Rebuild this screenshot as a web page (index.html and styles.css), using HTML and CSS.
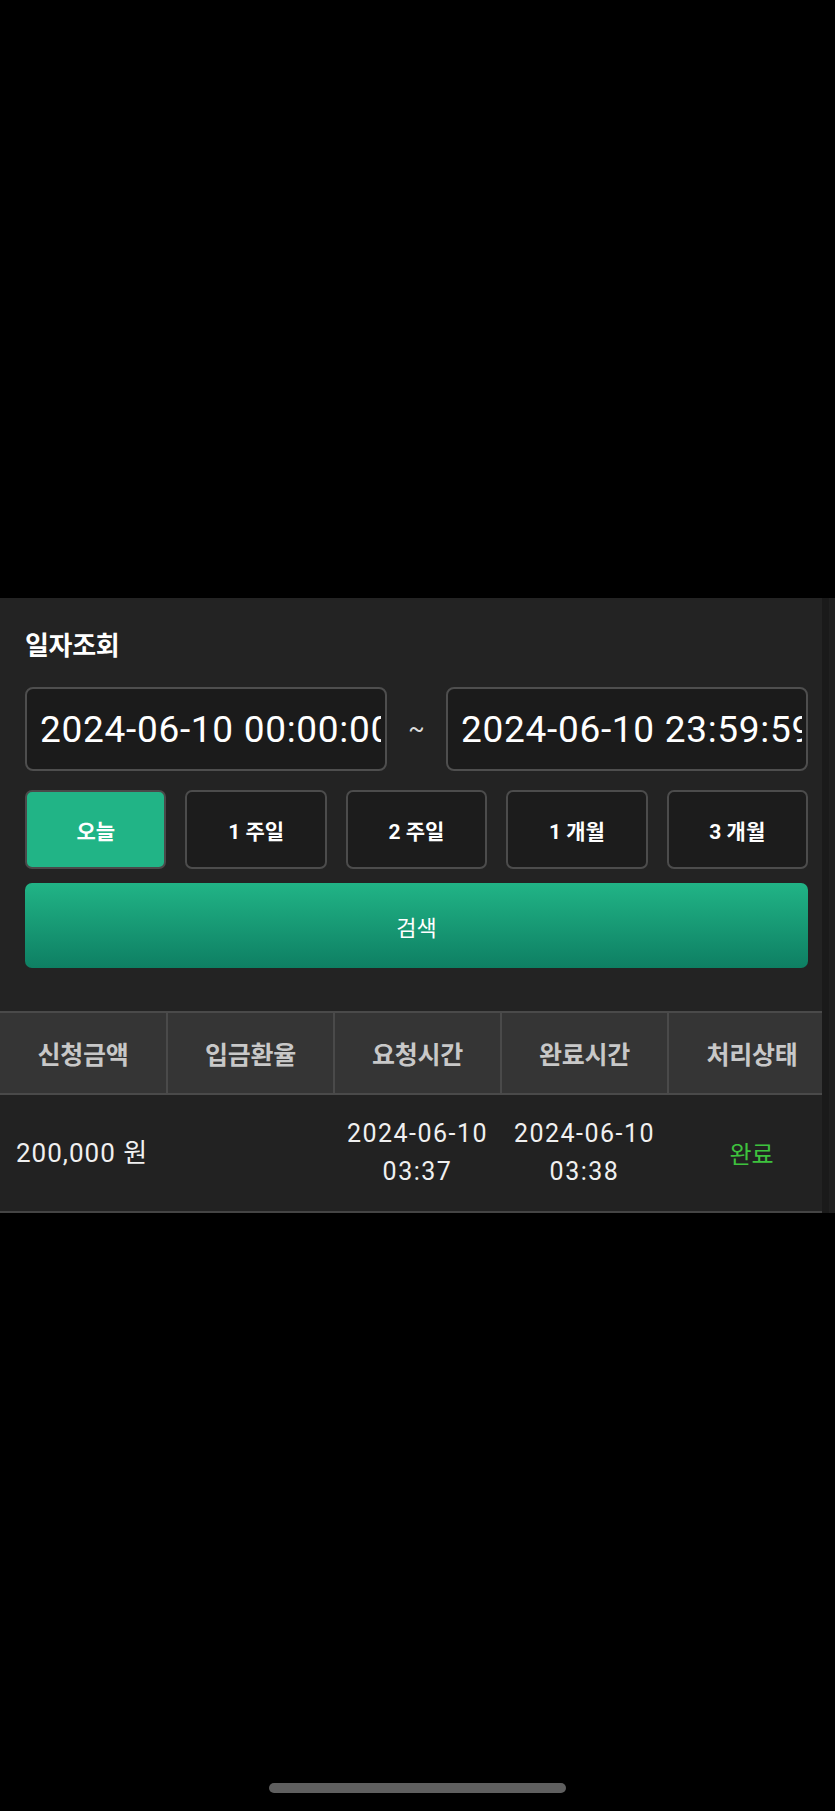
FILE: index.html
```html
<!DOCTYPE html>
<html lang="ko">
<head>
    <meta charset="UTF-8">
    <meta name="viewport" content="width=device-width, initial-scale=1.0">
    <title>일자조회</title>
    <link rel="stylesheet" href="styles.css">
</head>
<body>
    <div class="screen">
        <div class="backdrop"></div>

        <section class="sheet">
            <div class="filter">
                <h2 class="filter-title">일자조회</h2>

                <div class="date-range">
                    <input type="text" class="date-input" value="2024-06-10 00:00:00" readonly>
                    <span class="tilde">~</span>
                    <input type="text" class="date-input" value="2024-06-10 23:59:59" readonly>
                </div>

                <div class="period-buttons">
                    <button class="period-btn active">오늘</button>
                    <button class="period-btn">1 주일</button>
                    <button class="period-btn">2 주일</button>
                    <button class="period-btn">1 개월</button>
                    <button class="period-btn">3 개월</button>
                </div>

                <button class="search-btn">검색</button>
            </div>

            <table class="history">
                <thead>
                    <tr>
                        <th>신청금액</th>
                        <th>입금환율</th>
                        <th>요청시간</th>
                        <th>완료시간</th>
                        <th>처리상태</th>
                    </tr>
                </thead>
                <tbody>
                    <tr>
                        <td class="amount">200,000 원</td>
                        <td></td>
                        <td class="time">2024-06-10<br>03:37</td>
                        <td class="time">2024-06-10<br>03:38</td>
                        <td class="status done">완료</td>
                    </tr>
                </tbody>
            </table>

            <!-- scroll track on the right edge -->
            <div class="scroll-track"></div>
        </section>

        <div class="home-indicator"></div>
    </div>
</body>
</html>
```

FILE: styles.css
```css
html, body {
    margin: 0;
    padding: 0;
    background-color: #000;
}

body {
    font-family: Roboto, "Noto Sans CJK KR", sans-serif;
    color: #f2f2f2;
}

.screen {
    width: 835px;
    height: 1811px;
    display: flex;
    flex-direction: column;
    overflow: hidden;
}

.backdrop {
    height: 598px;
    flex: none;
}

.sheet {
    position: relative;
    background-color: #232323;
    overflow: hidden;
}

.filter {
    padding: 33px 27px 43px 25px;
}

.filter-title {
    margin: 0;
    font-size: 26px;
    line-height: 31px;
    font-weight: 700;
    color: #fff;
    letter-spacing: -0.3px;
}

/* date range */
.date-range {
    display: flex;
    align-items: center;
    margin-top: 25px;
}

.date-input {
    box-sizing: border-box;
    width: 362px;
    height: 84px;
    padding: 0 4px 0 13px;
    background-color: #1b1b1b;
    border: 2px solid #4e4e4e;
    border-radius: 8px;
    color: #fff;
    font-family: Roboto, sans-serif;
    font-size: 37px;
    letter-spacing: 0.7px;
    outline: none;
}

.tilde {
    width: 60px;
    text-align: center;
    font-size: 24px;
    color: #ddd;
}

/* period buttons */
.period-buttons {
    display: grid;
    grid-template-columns: repeat(5, 1fr);
    gap: 19px;
    margin-top: 19px;
}

.period-btn {
    height: 79px;
    background-color: #1c1c1c;
    border: 2px solid #4c4c4c;
    border-radius: 7px;
    color: #fff;
    font-family: Roboto, "Noto Sans CJK KR", sans-serif;
    font-size: 21px;
    font-weight: 700;
    cursor: pointer;
}

.period-btn.active {
    background-color: #21b486;
    border-color: #4a4a4a;
}

.search-btn {
    display: block;
    width: 100%;
    height: 85px;
    margin-top: 14px;
    border: none;
    border-radius: 7px;
    background: linear-gradient(to bottom, #21b486, #0e7f63);
    color: #fff;
    font-family: "Noto Sans CJK KR", sans-serif;
    font-size: 22px;
    cursor: pointer;
}

/* history table */
.history {
    width: 835px;
    border-collapse: collapse;
    table-layout: fixed;
}

.history th {
    height: 78px;
    background-color: #353535;
    border: 2px solid #4a4a4a;
    border-left: none;
    color: #c8c8c8;
    font-family: "Noto Sans CJK KR", sans-serif;
    font-size: 25px;
    font-weight: 700;
    letter-spacing: -0.3px;
}

.history th:last-child {
    border-right: none;
}

.history td {
    height: 116px;
    padding: 0;
    background-color: #222;
    border-bottom: 2px solid #444;
    font-size: 25px;
    line-height: 38px;
    text-align: center;
    color: #f0f0f0;
}

.history td.amount {
    text-align: left;
    padding-left: 16px;
    white-space: nowrap;
    font-size: 26px;
    letter-spacing: 1px;
}

.history td.time {
    letter-spacing: 1.5px;
}

.history td.done {
    color: #3ec23e;
    font-family: "Noto Sans CJK KR", sans-serif;
    font-size: 24px;
}

.scroll-track {
    position: absolute;
    top: 0;
    right: 0;
    bottom: 0;
    width: 13px;
    background: linear-gradient(to right, #1a1a1a 0, #1a1a1a 7px, #202020 7px);
}

/* iOS home bar */
.home-indicator {
    width: 297px;
    height: 10px;
    margin: auto auto 18px;
    border-radius: 5px;
    background-color: #5f5f5f;
}
```
